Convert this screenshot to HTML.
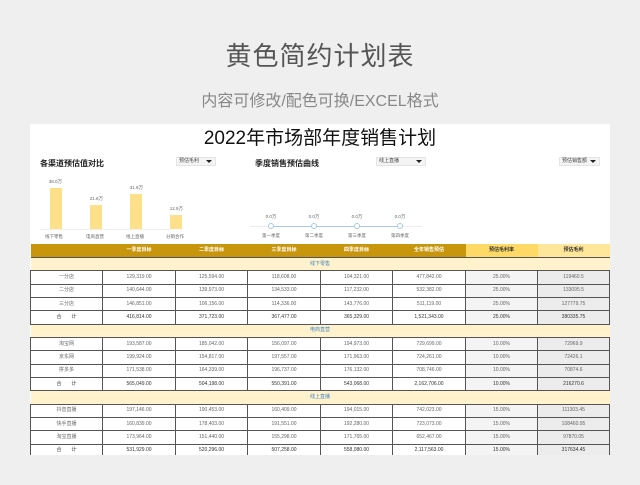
<!DOCTYPE html>
<html><head><meta charset="utf-8"><style>
*{margin:0;padding:0;box-sizing:border-box}
body{width:640px;height:485px;background:#efefef;position:relative;overflow:hidden;font-family:"Liberation Sans","Noto Sans CJK SC",sans-serif}
.a{position:absolute;white-space:nowrap}
.panel{position:absolute;left:30px;top:124px;width:580px;height:331px;background:#fff}
.sm{font-size:5px;color:#666;transform:scale(.9)}
.bar{position:absolute;background:#ffe08a;width:12px}
.dd{position:absolute;height:9px;background:#f4f4f4;border:1px solid #e4e4e4;font-size:5px;color:#444;line-height:7px;padding-left:2px}
.dd b{position:absolute;right:3px;top:2px;width:0;height:0;border-left:3px solid transparent;border-right:3px solid transparent;border-top:3px solid #222}
table{position:absolute;left:30px;top:244px;border-collapse:collapse;table-layout:fixed;width:579px}
td{height:13.35px;font-size:5px;color:#666;text-align:center;border:1px solid #555;padding:0;line-height:11px}
tr.h td{background:#c8960c;color:#fff;font-weight:bold;border:none}
tr.h td.y1{background:#ffd966;color:#333}
tr.h td.y2{background:#ffe699;color:#333}
tr.s td{background:#fff2cc;color:#3d85c6;border-left:none;border-right:none}
td.g1{background:#f4f4f4}
td.g2{background:#ececec}
tr.t td{color:#333}
</style></head><body>
<div class="a" style="left:0;width:640px;text-align:center;top:36px;font-size:26px;color:#555;letter-spacing:1px">黄色简约计划表</div>
<div class="a" style="left:0;width:640px;text-align:center;top:87px;font-size:16px;color:#888">内容可修改/配色可换/EXCEL格式</div>
<div class="panel"></div>
<div class="a" style="left:0;width:640px;text-align:center;top:123px;font-size:19px;color:#111">2022年市场部年度销售计划</div>

<div class="a" style="left:40px;top:158px;font-size:8px;font-weight:bold;color:#222">各渠道预估值对比</div>
<div class="dd" style="left:176px;top:157px;width:40px">预估毛利<b></b></div>
<div class="a" style="left:40px;top:229px;width:130px;height:1px;background:#eee"></div>
<div class="bar" style="left:50px;top:188px;height:41px"></div>
<div class="bar" style="left:90px;top:205px;height:24px"></div>
<div class="bar" style="left:130px;top:194px;height:35px"></div>
<div class="bar" style="left:170px;top:215px;height:14px"></div>
<div class="a sm" style="left:48px;top:178px">38.0万</div>
<div class="a sm" style="left:89px;top:195px">21.6万</div>
<div class="a sm" style="left:129px;top:184px">31.8万</div>
<div class="a sm" style="left:169px;top:205px">12.9万</div>
<div class="a sm" style="left:44px;top:233px">线下零售</div>
<div class="a sm" style="left:85px;top:233px">电商直营</div>
<div class="a sm" style="left:125px;top:233px">线上直播</div>
<div class="a sm" style="left:165px;top:233px">分销合作</div>

<div class="a" style="left:255px;top:158px;font-size:8px;font-weight:bold;color:#222">季度销售预估曲线</div>
<div class="dd" style="left:376px;top:157px;width:50px">线上直播<b></b></div>
<div class="dd" style="left:559px;top:157px;width:41px">预估销售额<b></b></div>
<div class="a" style="left:250px;top:226px;width:172px;height:1px;background:#eee"></div>
<div class="a" style="left:271px;top:226px;width:129px;height:1px;background:#a8c8ea"></div>
<div class="a" style="left:268px;top:223px;width:6px;height:6px;border:1px solid #a8c8ea;border-radius:50%;background:#fff"></div>
<div class="a" style="left:311px;top:223px;width:6px;height:6px;border:1px solid #a8c8ea;border-radius:50%;background:#fff"></div>
<div class="a" style="left:354px;top:223px;width:6px;height:6px;border:1px solid #a8c8ea;border-radius:50%;background:#fff"></div>
<div class="a" style="left:397px;top:223px;width:6px;height:6px;border:1px solid #a8c8ea;border-radius:50%;background:#fff"></div>
<div class="a sm" style="left:265px;top:213px">0.0万</div>
<div class="a sm" style="left:308px;top:213px">0.0万</div>
<div class="a sm" style="left:351px;top:213px">0.0万</div>
<div class="a sm" style="left:394px;top:213px">0.0万</div>
<div class="a sm" style="left:261px;top:232px">第一季度</div>
<div class="a sm" style="left:304px;top:232px">第二季度</div>
<div class="a sm" style="left:347px;top:232px">第三季度</div>
<div class="a sm" style="left:390px;top:232px">第四季度</div>

<table>
<colgroup><col style="width:72px"><col style="width:73px"><col style="width:72px"><col style="width:73px"><col style="width:72px"><col style="width:73px"><col style="width:72px"><col style="width:72px"></colgroup>
<tr class="h"><td></td><td>一季度目标</td><td>二季度目标</td><td>三季度目标</td><td>四季度目标</td><td>全年销售预估</td><td class="y1">预估毛利率</td><td class="y2">预估毛利</td></tr>
<tr class="s"><td colspan="8">线下零售</td></tr>
<tr><td>一分店</td><td>129,319.00</td><td>125,594.00</td><td>118,608.00</td><td>104,321.00</td><td>477,842.00</td><td class="g1">25.00%</td><td class="g2">119460.5</td></tr>
<tr><td>二分店</td><td>140,644.00</td><td>139,973.00</td><td>134,533.00</td><td>117,232.00</td><td>532,382.00</td><td class="g1">25.00%</td><td class="g2">133095.5</td></tr>
<tr><td>三分店</td><td>146,851.00</td><td>106,156.00</td><td>114,336.00</td><td>143,776.00</td><td>511,119.00</td><td class="g1">25.00%</td><td class="g2">127779.75</td></tr>
<tr class="t"><td>合　　计</td><td>416,814.00</td><td>371,723.00</td><td>367,477.00</td><td>365,329.00</td><td>1,521,343.00</td><td class="g1">25.00%</td><td class="g2">380335.75</td></tr>
<tr class="s"><td colspan="8">电商直营</td></tr>
<tr><td>淘宝网</td><td>193,587.00</td><td>185,042.00</td><td>156,097.00</td><td>194,973.00</td><td>729,699.00</td><td class="g1">10.00%</td><td class="g2">72969.9</td></tr>
<tr><td>京东网</td><td>199,924.00</td><td>154,817.00</td><td>197,557.00</td><td>171,963.00</td><td>724,261.00</td><td class="g1">10.00%</td><td class="g2">72426.1</td></tr>
<tr><td>拼多多</td><td>171,538.00</td><td>164,339.00</td><td>196,737.00</td><td>176,132.00</td><td>708,746.00</td><td class="g1">10.00%</td><td class="g2">70874.6</td></tr>
<tr class="t"><td>合　　计</td><td>565,049.00</td><td>504,198.00</td><td>550,391.00</td><td>543,068.00</td><td>2,162,706.00</td><td class="g1">10.00%</td><td class="g2">216270.6</td></tr>
<tr class="s"><td colspan="8">线上直播</td></tr>
<tr><td>抖音直播</td><td>197,146.00</td><td>190,453.00</td><td>160,409.00</td><td>194,015.00</td><td>742,023.00</td><td class="g1">15.00%</td><td class="g2">111303.45</td></tr>
<tr><td>快手直播</td><td>160,839.00</td><td>178,403.00</td><td>191,551.00</td><td>192,280.00</td><td>723,073.00</td><td class="g1">15.00%</td><td class="g2">108460.95</td></tr>
<tr><td>淘宝直播</td><td>173,964.00</td><td>151,440.00</td><td>155,298.00</td><td>171,765.00</td><td>652,467.00</td><td class="g1">15.00%</td><td class="g2">97870.05</td></tr>
<tr class="t"><td>合　　计</td><td>531,929.00</td><td>520,296.00</td><td>507,258.00</td><td>558,080.00</td><td>2,117,563.00</td><td class="g1">15.00%</td><td class="g2">317634.45</td></tr>
</table>
<div class="a" style="left:0;top:455px;width:640px;height:30px;background:#efefef"></div>
</body></html>
